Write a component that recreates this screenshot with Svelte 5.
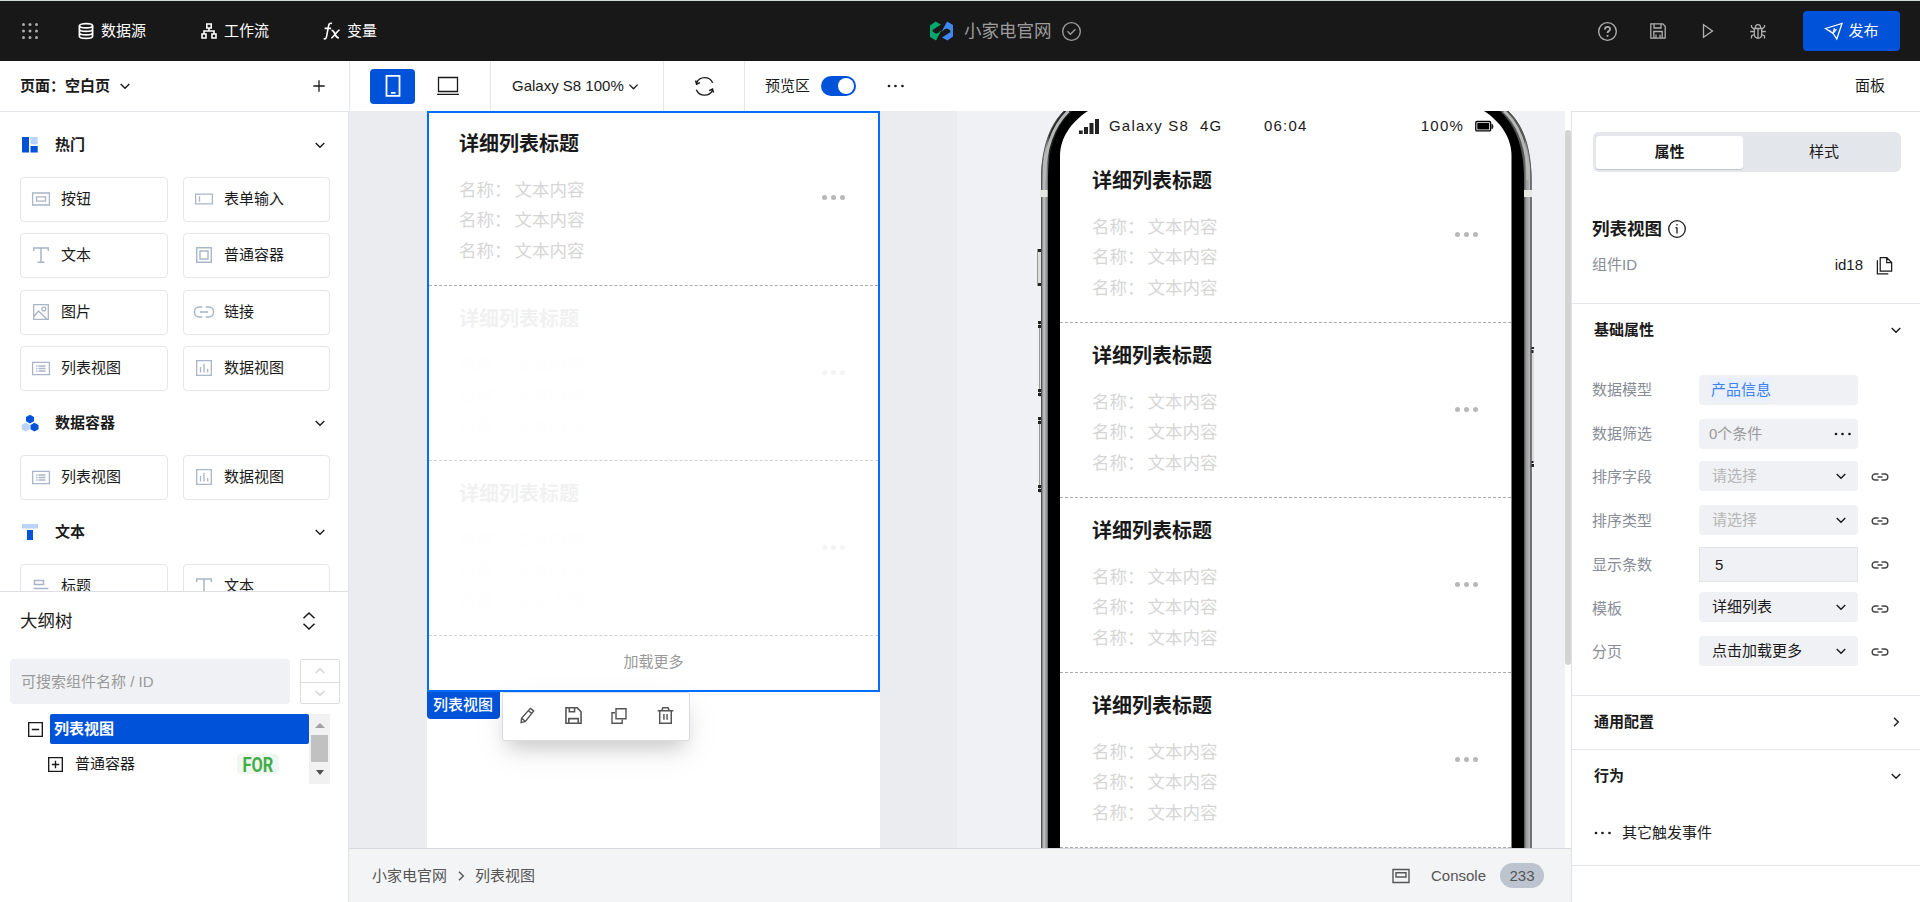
<script lang="ts">
  const icons: Record<string, string> = {
    apps: '<g fill="currentColor" stroke="none"><circle cx="3.5" cy="3.5" r="1.5"/><circle cx="10" cy="3.5" r="1.5"/><circle cx="16.5" cy="3.5" r="1.5"/><circle cx="3.5" cy="10" r="1.5"/><circle cx="10" cy="10" r="1.5"/><circle cx="16.5" cy="10" r="1.5"/><circle cx="3.5" cy="16.5" r="1.5"/><circle cx="10" cy="16.5" r="1.5"/><circle cx="16.5" cy="16.5" r="1.5"/></g>',
    database: '<g stroke-width="1.7"><ellipse cx="10" cy="4.7" rx="6.6" ry="2.1"/><path d="M3.4 4.7v10.6c0 1.2 3 2.1 6.6 2.1s6.6-.9 6.6-2.1V4.7M3.4 8.3c0 1.2 3 2.1 6.6 2.1s6.6-.9 6.6-2.1M3.4 11.8c0 1.2 3 2.1 6.6 2.1s6.6-.9 6.6-2.1"/></g>',
    flow: '<g stroke-width="1.6"><path d="M7.8 3h4.4v4H7.8zM3 13h4v4H3zM13 13h4v4h-4zM10 7v3M5 13v-3h10v3"/></g>',
    fx: '<g stroke-width="1.6"><path d="M10 2.6C7.7 1.6 6.9 3 6.5 5.2L4.6 15.4c-.4 2.3-1.3 2.8-2.9 2.2M2.6 7.4h6.5M9.5 9.3c2 0 2.4 1.2 3.4 3.6s1.6 4 4 4M17.6 9c-2.4.4-6 7.6-8.4 8"/></g>',
    help: '<circle cx="10" cy="10" r="8.4"/><path d="M7.5 8c0-3.2 5-3.2 5-.2 0 1.7-2.5 1.9-2.5 3.7M10 13.3v1.7" stroke-width="1.7"/>',
    save: '<path d="M2.8 2.8h12l2.4 2.4v12H2.8zM5.8 17v-6.5h8.4V17M6 3v4h7V3M8 13.5v3.5M12 13.5v3.5"/>',
    play: '<path d="M5.5 3.8v12.4l9-6.2z"/>',
    bug: '<path d="M6.3 7.5h7.4v6c0 5-7.4 5-7.4 0zM7.3 7.3c0-5 5.4-5 5.4 0M10 8v9M6 10.5H2.2M17.8 10.5H14M6 8L3.5 6V4M14 8l2.5-2V4M6.3 13.5L3.500 15v2.500M13.700 13.500l2.800 1.500v2.500"/>',
    send: '<path d="M1.5 7.5L18 2.5 12.8 18l-3.7-5.5zM9 12.4l1.5-5.2M5 9.3l4 3.1 3.500-4.200"/>',
    checkCircle: '<circle cx="10" cy="10" r="8.4"/><path d="M6.2 9.8l2.8 2.9 4.8-4.8"/>',
    down: '<path d="M5.7 8l4.3 4.3L14.3 8" stroke-width="1.4"/>',
    up: '<path d="M5.7 12L10 7.7l4.3 4.3"/>',
    right: '<path d="M8 5.700l4.300 4.300L8 14.300" stroke-width="1.400"/>',
    plus: '<path d="M10 4.300v11.400M4.300 10h11.400"/>',
    phone: '<path d="M3.500-.2h13v20h-13zM8 16.800h4.500" stroke-width="1.800"/>',
    laptop: '<path d="M.5 1.500h19v14H.5zM-1 18.300h22"/>',
    refresh: '<path d="M2.500 6.700C5-.2 15-.2 17.800 6.500M2.200 13c3 6.900 12.500 6.900 15.600.3M1.500 4.300l.9 3.500 3.300-1.500M18.600 15.900l-.9-3.500-3.300 1.500"/>',
    more: '<g fill="currentColor" stroke="none"><circle cx="3" cy="10" r="1.350"/><circle cx="9.500" cy="10" r="1.350"/><circle cx="16.500" cy="10" r="1.350"/></g>',
    button: '<path d="M1.600 4h16.800v12H1.600zM5.500 7.800h9v4.400h-9z"/>',
    input: '<path d="M1.600 5.200h16.800v9.600H1.600zM5.500 7.300v5.500"/>',
    text: '<path d="M2.700 6V3h14.600v3M10 3v14.300M6.500 17.300h7" stroke-width="1.500"/>',
    container: '<path d="M2.700 2.700h14.600v14.600H2.700zM6 6h8v8H6z" stroke-width="1.400"/>',
    image: '<path d="M2.700 2.700h14.600v14.600H2.700zM3 14.500L7.500 9l8.500 8.300"/><circle cx="12.800" cy="7" r="1.900"/>',
    chain: '<path d="M8.300 5H5.200C-1.200 5-1.200 15 5.200 15h3.100M11.700 5h3.100c6.400 0 6.400 10 0 10h-3.100M6 10h8" stroke-width="1.500"/>',
    list: '<path d="M1.600 4.300h16.800v12.400H1.600zM5.200 8h1.300M7.500 8h7M5.200 10.500h1.300M7.500 10.500h7M5.200 13h1.300M7.500 13h7"/>',
    chart: '<path d="M2.700 2.700h14.600v14.600H2.700zM6.500 9v5.500M10 5.700v8.800M13.700 11v3.500" stroke-width="1.300"/>',
    heading: '<path d="M3.500 4.500h9v4h-9zM2.500 12.500h15" stroke-width="1.500"/>',
    updown: '<path d="M5 7.500L10 2.700l5 4.800M5 12.500l5 4.800 5-4.800" stroke-width="1.400"/>',
    minus: '<path d="M3.500 3.500h13v13h-13zM6.500 10h7" stroke-width="1.300"/>',
    plusBox: '<path d="M3.500 3.500h13v13h-13zM6.500 10h7M10 6.500v7" stroke-width="1.300"/>',
    pencil: '<path d="M13 2.500l3.500 2.700-8.700 11-4.500 1.300.4-4.600zM11 5l3.500 2.800M3.900 13l3.700 3" stroke-width="1.500"/>',
    disk: '<path d="M2.800 2.700h10.700l3.700 3.700v10.900H2.800zM6 3v3.500h5V3M5.500 17v-4h9v4" stroke-width="1.500"/>',
    duplicate: '<path d="M7 2.700h10v10H7zM6 6.800H3v10.500h10.200v-3.500" stroke-width="1.400"/>',
    trash: '<path d="M4.500 6v11.300h11V6M2.500 5.500h15M6.500 5l1-2.300h5l1 2.300M8.500 8.500V14M11.500 8.500V14" stroke-width="1.400"/>',
    info: '<circle cx="10" cy="10" r="8.300"/><path d="M10 8.500v6M8.500 8.700H10M10 5v1.500"/>',
    copy: '<path d="M5.500 1.800h7l5 5V16h-12zM12.300 2v5h5M2.500 4.500v14.300h11.500" stroke-width="1.300"/>',
    window: '<path d="M2 3.500h16v13H2zM5 6.800h10v4.200H5z" stroke-width="1.400"/>',
  };

  const navItems = [
    { icon: 'database', label: '数据源' },
    { icon: 'flow', label: '工作流' },
    { icon: 'fx', label: '变量' },
  ];

  const groups = [
    {
      kind: 'hot',
      name: '热门',
      items: [
        ['button', '按钮'],
        ['input', '表单输入'],
        ['text', '文本'],
        ['container', '普通容器'],
        ['image', '图片'],
        ['chain', '链接'],
        ['list', '列表视图'],
        ['chart', '数据视图'],
      ],
    },
    {
      kind: 'data',
      name: '数据容器',
      items: [
        ['list', '列表视图'],
        ['chart', '数据视图'],
      ],
    },
    {
      kind: 'type',
      name: '文本',
      items: [
        ['heading', '标题'],
        ['text', '文本'],
      ],
    },
  ];

  const fields = [
    { label: '数据模型', value: '产品信息', kind: 'tag' },
    { label: '数据筛选', value: '0个条件', kind: 'filter' },
    { label: '排序字段', value: '请选择', kind: 'select', empty: true },
    { label: '排序类型', value: '请选择', kind: 'select', empty: true },
    { label: '显示条数', value: '5', kind: 'number' },
    { label: '模板', value: '详细列表', kind: 'select' },
    { label: '分页', value: '点击加载更多', kind: 'select' },
  ];

  let previewOn = $state(true);
  let activeTab = $state('属性');
</script>

{#snippet icon(name: string, size = 20)}
  <svg class="icon" width={size} height={size} viewBox="0 0 20 20" fill="none" stroke="currentColor" stroke-width="1.3">
    {@html icons[name]}
  </svg>
{/snippet}

{#snippet listItem(faded: boolean)}
  <div class="item" class:faded>
    <div class="item-title">详细列表标题</div>
    {#each [0, 1, 2] as row (row)}
      <div class="item-line"><span>名称：</span><span>文本内容</span></div>
    {/each}
    <div class="item-dots"><i></i><i></i><i></i></div>
  </div>
{/snippet}

<div class="app">
  <header class="topbar">
    <nav class="nav">
      <span class="apps">{@render icon('apps')}</span>
      {#each navItems as item}
        <a class="nav-item" href="#top">{@render icon(item.icon)}<span>{item.label}</span></a>
      {/each}
    </nav>
    <div class="project">
      <svg width="23" height="20" viewBox="0 0 23 20">
        <path d="M0 4.500L5.500.5 11 3.500 2.500 9v2l4 2.500L11.500 9 6 19.500 0 16z" fill="#07a86c" />
        <path d="M23 4v11.500L17.500 19.500 12 16.500 20.500 11V9l-4-2.500L11.500 11 17 .5z" fill="#4086f5" />
        <path d="M2 8.500L0 9.800v3l6 3 2.500-4-2.500 1-3.500-2zM21 11.500l2-1.300v-3l-6-3-2.500 4 2.500-1 3.500 2z" fill="#07a86c" />
        <path d="M21 11.500l2-1.300v-3l-6-3-2.500 4 2.500-1 3.500 2z" fill="#4086f5" />
      </svg>
      <span>小家电官网</span>
      {@render icon('checkCircle', 21)}
    </div>
    <div class="actions">
      {@render icon('help', 21)}
      {@render icon('save')}
      {@render icon('play')}
      {@render icon('bug')}
    </div>
    <button class="publish">{@render icon('send')}<span>发布</span></button>
  </header>

  <div class="toolbar">
    <div class="page-picker">
      <span>页面：空白页</span>
      {@render icon('down')}
      <span class="add">{@render icon('plus')}</span>
    </div>
    <div class="devices">
      <button class="device active">{@render icon('phone')}</button>
      {@render icon('laptop')}
    </div>
    <div class="zoom-picker">Galaxy S8 100% {@render icon('down', 19)}</div>
    <div class="reload">{@render icon('refresh', 21)}</div>
    <div class="preview-switch">
      <span>预览区</span>
      <button class="switch" class:on={previewOn} aria-label="预览区" onclick={() => (previewOn = !previewOn)}></button>
      {@render icon('more')}
    </div>
    <span class="panel-link">面板</span>
  </div>

  <div class="workspace">
    <aside class="sidebar">
      <div class="library">
        {#each groups as group}
          <div class="group-head">
            <svg width="18" height="18" viewBox="0 0 18 18">
              {#if group.kind === 'hot'}
                <path d="M1 1h7v15.500H1zM9.500 10h7.200v6.500H9.500z" fill="#0052d9" />
                <path d="M9.500 1h7.200v7.300H9.500z" fill="#bbd3fb" />
              {:else if group.kind === 'data'}
                <path d="M4.700 8.800l4 2.200v4.200l-4 2.200-4-2.200V11z" fill="#bbd3fb" />
                <path d="M9 .8l4 2.200v4.200L9 9.400 5 7.200V3zM13.500 8.800l4 2.200v4.200l-4 2.200-4-2.200V11z" fill="#0052d9" />
              {:else}
                <path d="M1 1h16v4.500H1z" fill="#bbd3fb" />
                <path d="M6 7h6v10H6z" fill="#0052d9" />
              {/if}
            </svg>
            <span>{group.name}</span>
            {@render icon('down')}
          </div>
          <div class="cards">
            {#each group.items as [glyph, label]}
              <div class="card">{@render icon(glyph)}<span>{label}</span></div>
            {/each}
          </div>
        {/each}
      </div>

      <section class="outline">
        <div class="outline-head"><span>大纲树</span>{@render icon('updown', 22)}</div>
        <div class="search-row">
          <input class="search" placeholder="可搜索组件名称 / ID" />
          <div class="stepper">
            <span>{@render icon('up')}</span>
            <span>{@render icon('down')}</span>
          </div>
        </div>
        <div class="tree">
          <div class="tree-rows">
            <div class="tree-row">
              {@render icon('minus', 21)}
              <span class="node selected">列表视图</span>
            </div>
            <div class="tree-row child">
              {@render icon('plusBox', 21)}
              <span class="node">普通容器</span>
              <span class="for"><b>FOR</b></span>
            </div>
          </div>
          <div class="tree-scroll">
            <i class="arrow-up"></i>
            <i class="thumb"></i>
            <i class="arrow-down"></i>
          </div>
        </div>
      </section>
    </aside>

    <main class="main">
      <div class="stage">
        <div class="edit-pane">
          <div class="canvas">
            <div class="selection">
              {@render listItem(false)}
              {@render listItem(true)}
              {@render listItem(true)}
              <div class="load-more">加载更多</div>
              <span class="selection-tag">列表视图</span>
              <div class="float-bar">
                {@render icon('pencil', 19)}
                {@render icon('disk', 21)}
                {@render icon('duplicate')}
                {@render icon('trash', 21)}
              </div>
            </div>
          </div>
        </div>
        <div class="preview-pane">
          <svg class="phone-frame" width="608" height="737" viewBox="957 111 608 737">
            <defs>
              <linearGradient id="metal" x1="1041" x2="1532" y1="0" y2="0" gradientUnits="userSpaceOnUse">
                <stop offset="0" stop-color="#444" />
                <stop offset=".003" stop-color="#8c9090" />
                <stop offset=".006" stop-color="#c3c6c6" />
                <stop offset=".012" stop-color="#8c9090" />
                <stop offset=".017" stop-color="#222" />
                <stop offset=".984" stop-color="#555" />
                <stop offset=".988" stop-color="#98989b" />
                <stop offset=".995" stop-color="#b9b9bd" />
                <stop offset="1" stop-color="#333" />
              </linearGradient>
            </defs>
            <g fill="#dcdfdf" stroke="#999" stroke-width="1">
              <rect x="1037.5" y="249.5" width="4" height="36" />
              <rect x="1039.5" y="322" width="2" height="74" />
              <rect x="1039.5" y="418" width="2" height="74" />
            </g>
            <path d="M1532 353h2v108h-2z" fill="#dcdadb" />
            <path
              d="M1038 249h3v3h-3zM1038 283h3v3h-3zM1038 321h3v3h-3zM1038 325h3v3h-3zM1038 389h3v3h-3zM1038 393h3v3h-3zM1038 417h3v3h-3zM1038 421h3v3h-3zM1038 485h3v3h-3zM1038 489h3v3h-3zM1531 347h3v2h-3zM1531 350h2.500v3h-2.500zM1531 461h2.500v2h-2.500zM1531 464h3v3h-3z"
              fill="#222"
            />
            <path d="M1064 111C1050 125 1041 148 1041 180V849H1531.500V180C1531.500 148 1523 125 1508 111z" fill="url(#metal)" />
            <path d="M1064 111C1050 125 1041.500 148 1041.500 180V849M1508 111C1523 125 1531 148 1531 180V849" fill="none" stroke="#555" />
            <path d="M1068.500 111C1054 125 1044.500 148 1044.500 180M1504 111C1519 125 1528 148 1528 180" fill="none" stroke="#b7b9b9" stroke-width="3" />
            <path d="M1072 111C1056 126 1048 148 1048 180V849H1524V180C1524 148 1516 126 1500 111z" fill="#000" />
            <path d="M1088 111C1071 122 1060 138 1060 156V849H1511.500V156C1511.500 138 1501 122 1484 111z" fill="#fff" />
            <path d="M1040 190h7.500v7H1040zM1524 190h8v7h-8z" fill="#e6e8e3" />
          </svg>
          <div class="screen">
            <div class="status">
              <svg width="20" height="16" viewBox="0 0 20 16" fill="#222">
                <path d="M0 12.500h3.700V16H0zM5 9h4V16H5zM10.500 5h4V16h-4zM16 1h4v15h-4z" />
              </svg>
              <span class="carrier">Galaxy S8</span>
              <span class="network">4G</span>
              <span class="clock">06:04</span>
              <span class="level">100%</span>
              <svg width="19" height="12" viewBox="0 0 19 12">
                <rect x=".8" y="1.500" width="14.800" height="9.400" rx="1" fill="none" stroke="#000" stroke-width="1.300" />
                <path d="M2.300 3h11.900v6.500H2.300zM16.500 4h1.200v1.500h.6v2h-.6V9h-1.200z" />
              </svg>
            </div>
            {#each [0, 1, 2, 3] as n (n)}
              {@render listItem(false)}
            {/each}
          </div>
        </div>
        <div class="pane-scroll"><i></i></div>
      </div>
      <footer class="footer">
        <span>小家电官网</span>
        {@render icon('right')}
        <span>列表视图</span>
        <div class="console">
          {@render icon('window')}
          <span>Console</span>
          <span class="count">233</span>
        </div>
      </footer>
    </main>

    <aside class="props">
      <div class="intro">
        <div class="tabs">
          {#each ['属性', '样式'] as tab}
            <button class="tab" class:active={activeTab === tab} onclick={() => (activeTab = tab)}>{tab}</button>
          {/each}
        </div>
        <div class="props-title"><span>列表视图</span>{@render icon('info')}</div>
        <div class="props-id">
          <span class="muted">组件ID</span>
          <span class="id">id18</span>
          {@render icon('copy', 19)}
        </div>
      </div>
      <section class="basic">
        <div class="section-head"><span>基础属性</span>{@render icon('down')}</div>
        <div class="fields">
          {#each fields as field}
            <div class="field">
              <span class="muted">{field.label}</span>
              <div class="control {field.kind}" class:empty={field.empty}>
                <span>{field.value}</span>
                {#if field.kind === 'select'}
                  {@render icon('down')}
                {:else if field.kind === 'filter'}
                  {@render icon('more')}
                {/if}
              </div>
              {#if field.kind === 'select' || field.kind === 'number'}
                <span class="bind">
                  <svg width="18" height="10" viewBox="0 0 18 10" fill="none" stroke="currentColor" stroke-width="1.400">
                    <path d="M7.500 2H4.300c-4.200 0-4.200 6 0 6h3.200M10.500 2h3.200c4.200 0 4.200 6 0 6h-3.200M6.500 5h5" />
                  </svg>
                </span>
              {/if}
            </div>
          {/each}
        </div>
      </section>
      <section class="common">
        <div class="section-head"><span>通用配置</span>{@render icon('right')}</div>
      </section>
      <section class="behavior">
        <div class="section-head"><span>行为</span>{@render icon('down')}</div>
        <div class="event">{@render icon('more')}<span>其它触发事件</span></div>
      </section>
    </aside>
  </div>
</div>

<style>
  :global(body) {
    overflow: hidden;
  }

  .app {
    display: flex;
    flex-direction: column;
    width: 1920px;
    height: 902px;
    font-family: "Liberation Sans", "Noto Sans CJK SC", sans-serif;
    font-size: 15px;
    line-height: 20px;
    color: #1a1a1a;
    background: #fff;
  }
  .app *,
  .app {
    box-sizing: border-box;
  }
  .icon {
    flex: none;
    display: block;
    overflow: visible;
  }
  button {
    font: inherit;
    border: none;
    padding: 0;
  }

  .topbar {
    display: flex;
    align-items: center;
    flex: none;
    height: 61px;
    padding-right: 20px;
    border-top: 1px solid #d2dad5;
    background: #181818;
    color: #fff;
  }
  .nav {
    display: flex;
    align-items: center;
    width: 930px;
    padding-left: 20px;
  }
  .apps {
    width: 56px;
    color: #aaa;
  }
  .nav-item {
    display: flex;
    align-items: center;
    gap: 5px;
    margin-right: 53px;
    color: inherit;
    text-decoration: none;
  }
  .project {
    display: flex;
    align-items: center;
    font-size: 17.5px;
    color: #9c9c9c;
  }
  .project span {
    margin: 0 9px 0 11px;
  }
  .actions {
    display: flex;
    align-items: center;
    gap: 30px;
    margin-left: auto;
    color: #b0b0b0;
  }
  .publish {
    display: flex;
    align-items: center;
    justify-content: center;
    gap: 4px;
    width: 97px;
    height: 40px;
    margin-left: 35px;
    border-radius: 4px;
    background: #0052d9;
    color: #fff;
  }

  .toolbar {
    display: flex;
    flex: none;
    height: 50px;
    align-items: stretch;
  }
  .toolbar > div {
    display: flex;
    align-items: center;
    border-right: 1px solid #e3e6eb;
  }
  .page-picker {
    width: 350px;
    padding: 0 20px;
    font-weight: 600;
  }
  .page-picker > span:first-child {
    margin-right: 5px;
  }
  .add {
    margin-left: auto;
  }
  .devices {
    width: 141px;
    padding-left: 20px;
    gap: 23px;
  }
  .device {
    display: flex;
    align-items: center;
    justify-content: center;
    width: 45px;
    height: 35px;
    border-radius: 4px;
    background: #0052d9;
    color: #fff;
  }
  .zoom-picker {
    width: 173px;
    padding-left: 21px;
    white-space: nowrap;
  }
  .reload {
    width: 81px;
    justify-content: center;
  }
  .toolbar .preview-switch {
    padding-left: 20px;
    border: none;
  }
  .switch {
    width: 35px;
    height: 20px;
    margin: 0 30px 0 11px;
    padding: 2px;
    border-radius: 10px;
    background: #c4c9d2;
    text-align: left;
  }
  .switch::after {
    content: "";
    display: block;
    width: 16px;
    height: 16px;
    border-radius: 50%;
    background: #fff;
  }
  .switch.on {
    background: #0052d9;
  }
  .switch.on::after {
    margin-left: auto;
  }
  .panel-link {
    align-self: center;
    margin: 0 35px 0 auto;
  }

  .workspace {
    display: flex;
    height: 791px;
  }
  .sidebar {
    display: flex;
    flex-direction: column;
    width: 349px;
    border-top: 1px solid #e3e6eb;
    border-right: 1px solid #e0e2e8;
  }
  .library {
    height: 479px;
    padding: 1px 18px 0 20px;
    overflow: hidden;
  }
  .group-head {
    display: flex;
    align-items: center;
    height: 64px;
    padding-left: 1px;
    font-weight: 600;
  }
  .group-head > span {
    flex: 1;
    margin-left: 16px;
  }
  .cards {
    display: grid;
    grid-template-columns: 148px 147px;
    gap: 11.33px 15px;
  }
  .card {
    display: flex;
    align-items: center;
    gap: 10px;
    height: 45px;
    padding: 0 0 1px 10px;
    border: 1px solid #e3e6eb;
    border-radius: 4px;
  }
  .card :global(.icon) {
    color: #a9b5c8;
  }

  .outline {
    flex: 1;
    border-top: 1px solid #dcdee3;
  }
  .outline-head {
    display: flex;
    align-items: center;
    justify-content: space-between;
    height: 57px;
    padding: 0 28px 0 20px;
    font-size: 17.5px;
  }
  .search-row {
    display: flex;
    gap: 10px;
    margin: 10px 8px 10px 10px;
  }
  .search {
    width: 280px;
    height: 45px;
    padding: 0 11px;
    border: none;
    border-radius: 4px;
    background: #f0f1f5;
    font: inherit;
  }
  .search::placeholder {
    color: #999;
  }
  .stepper {
    width: 40px;
    height: 45px;
    border: 1px solid #dcdcdc;
    border-radius: 2px;
    color: #d2d2d2;
  }
  .stepper span {
    display: flex;
    align-items: center;
    justify-content: center;
    height: 21.5px;
  }
  .stepper span + span {
    border-top: 1px solid #dcdcdc;
  }
  .tree {
    display: flex;
    height: 70px;
    padding-left: 25px;
  }
  .tree-rows {
    width: 284px;
  }
  .tree-row {
    display: flex;
    align-items: center;
    height: 30px;
    gap: 4px;
  }
  .tree-row.child {
    height: 40px;
    padding: 0 30px 0 20px;
  }
  .node {
    flex: 1;
    padding-left: 5px;
    line-height: 30px;
  }
  .node.selected {
    padding-left: 4px;
    border-radius: 2px;
    background: #0052d9;
    color: #fff;
    font-weight: 600;
  }
  .for {
    display: flex;
    align-items: center;
    justify-content: center;
    width: 42px;
    height: 20px;
    border-radius: 4px;
    background: #f0f7f0;
  }
  .for b {
    color: #41ad49;
    font-family: Roboto, sans-serif;
    font-size: 20px;
    font-weight: 700;
    line-height: 22px;
    transform: translateY(1px) scaleX(0.82);
  }
  .tree-scroll {
    display: flex;
    flex-direction: column;
    align-items: center;
    width: 21px;
    padding-top: 9px;
    background: #f1f1f1;
  }
  .arrow-up {
    border: 5px solid transparent;
    border-top: none;
    border-bottom-color: #a3a3a3;
  }
  .thumb {
    width: 17px;
    height: 27px;
    margin: 7px 0 8px;
    background: #c1c1c1;
  }
  .arrow-down {
    border: 4px solid transparent;
    border-bottom: none;
    border-top: 5px solid #505050;
  }

  .main {
    width: 1222px;
  }
  .stage {
    display: flex;
    height: 737px;
    overflow: hidden;
  }
  .edit-pane {
    width: 608px;
    padding-left: 78px;
    background: #ebecf0;
  }
  .canvas {
    width: 453px;
    height: 737px;
    background: #fff;
  }
  .selection {
    position: relative;
    width: 453px;
    height: 581px;
    border: 2px solid #006eff;
    background: #fff;
  }
  .item {
    position: relative;
    height: 175px;
    padding: 17px 0 0 32px;
    border-bottom: 1px dashed #aaa;
  }
  .selection .item {
    padding-left: 30px;
  }
  .selection .item:first-child {
    height: 173px;
    padding-top: 15px;
  }
  .item.faded {
    border-color: #d0d0d0;
  }
  .item-title {
    margin-bottom: 15px;
    font-size: 20px;
    font-weight: 700;
    line-height: 32px;
  }
  .item-line {
    display: flex;
    gap: 3px;
    font-size: 17.5px;
    line-height: 30.4px;
    color: #d6d6d6;
  }
  .item-dots {
    position: absolute;
    right: 33px;
    top: 84px;
    display: flex;
    gap: 4px;
  }
  .selection .item:first-child .item-dots {
    top: 82px;
  }
  .item-dots i {
    width: 5px;
    height: 5px;
    border-radius: 50%;
    background: #b8b8b8;
  }
  .faded .item-title {
    color: #f1f1f1;
  }
  .faded .item-line {
    color: #fefefe;
  }
  .faded .item-dots i {
    background: #f4f4f4;
  }
  .load-more {
    line-height: 51px;
    text-align: center;
    color: #999;
  }
  .selection-tag {
    position: absolute;
    left: -2px;
    top: 579px;
    width: 73px;
    height: 27px;
    padding-left: 6px;
    border-radius: 0 0 4px 4px;
    background: #0052d9;
    color: #fff;
    font-weight: 500;
    line-height: 26px;
  }
  .float-bar {
    position: absolute;
    left: 73px;
    top: 579px;
    display: flex;
    align-items: center;
    justify-content: space-between;
    width: 188px;
    height: 49px;
    padding: 0 13px 2px 15px;
    border: 1px solid #d9dce5;
    border-radius: 3px;
    background: #fff;
    box-shadow: 0 12px 20px -6px rgba(0, 0, 0, 0.18), 0 12px 36px rgba(0, 0, 0, 0.06);
    color: #555;
  }

  .preview-pane {
    position: relative;
    width: 608px;
    background: #f0f1f5;
  }
  .phone-frame {
    position: absolute;
    left: 0;
    top: 0;
  }
  .screen {
    position: relative;
    width: 451px;
    margin-left: 103px;
  }
  .status {
    display: flex;
    align-items: center;
    height: 37px;
    padding: 0 17px 7px 19px;
    letter-spacing: 1.2px;
  }
  .carrier {
    width: 91px;
    margin-left: 10px;
  }
  .network {
    width: 64px;
  }
  .clock {
    flex: 1;
  }
  .level {
    margin-right: 11px;
  }
  .pane-scroll {
    width: 6px;
    padding-top: 19px;
    background: #fff;
  }
  .pane-scroll i {
    display: block;
    height: 535px;
    border-radius: 3px;
    background: #d4d4d4;
  }

  .footer {
    display: flex;
    align-items: center;
    gap: 4px;
    height: 54px;
    padding: 0 27px 0 23px;
    border-top: 1px solid #d5d9e3;
    background: #f3f4f6;
    color: #555;
  }
  .console {
    display: flex;
    align-items: center;
    margin-left: auto;
  }
  .console > span {
    margin-left: 20px;
  }
  .console .count {
    width: 44px;
    height: 25px;
    margin-left: 14px;
    border-radius: 13px;
    background: #bcc4d0;
    line-height: 26px;
    text-align: center;
  }

  .props {
    width: 349px;
    border-top: 1px solid #e0e2e6;
    border-left: 1px solid #e0e2e6;
  }
  .intro {
    height: 192px;
    padding: 20px 19px 0 20px;
    border-bottom: 1px solid #e3e6eb;
  }
  .tabs {
    display: flex;
    height: 40px;
    padding: 4px 3px;
    margin-left: 1px;
    border-radius: 6px;
    background: #e3e6eb;
  }
  .tab {
    flex: 1;
    height: 33px;
    padding: 0 0 1px 7px;
    border-radius: 3px;
    background: none;
    color: #1a1a1a;
  }
  .tab.active {
    flex: 0 0 147px;
    padding-left: 0;
    background: #fff;
    box-shadow: 0 1px 0 #c0c7d4;
    font-weight: 600;
  }
  .props-title {
    display: flex;
    align-items: center;
    gap: 5px;
    height: 34px;
    margin-top: 40px;
    font-size: 17.5px;
    font-weight: 600;
  }
  .props-id {
    display: flex;
    align-items: center;
    height: 38px;
    padding-right: 7px;
  }
  .muted {
    color: #878c96;
  }
  .id {
    margin: 0 12px 0 auto;
  }
  .section-head {
    display: flex;
    align-items: center;
    justify-content: space-between;
    height: 51px;
    padding: 0 14px 0 22px;
    font-weight: 600;
  }
  .basic {
    height: 392px;
    border-bottom: 1px solid #e3e6eb;
  }
  .fields {
    padding: 13px 0 0 20px;
  }
  .field {
    display: flex;
    align-items: center;
    height: 43.75px;
  }
  .field .muted {
    width: 107px;
  }
  .control {
    display: flex;
    align-items: center;
    justify-content: space-between;
    width: 159px;
    height: 30px;
    padding: 0 7px 0 13px;
    border-radius: 4px;
    background: #f0f1f5;
  }
  .control.select {
    margin-top: -3px;
  }
  .control.filter {
    padding: 0 5px 0 10px;
    color: #999;
  }
  .control.filter :global(.icon) {
    color: #1a1a1a;
  }
  .control.tag {
    padding-left: 12px;
    color: #3e82f0;
  }
  .control.tag span {
    background: #e8f0fd;
    line-height: 23px;
  }
  .control.number {
    height: 35px;
    padding-left: 15px;
    border: 1px solid #e1e4e8;
    border-radius: 0;
  }
  .control.empty span {
    color: #b5b5b5;
  }
  .bind {
    margin-left: 13px;
    color: #444;
  }
  .bind svg {
    display: block;
  }
  .common {
    height: 54px;
    border-bottom: 1px solid #e3e6eb;
  }
  .behavior {
    height: 116px;
    border-bottom: 1px solid #e3e6eb;
  }
  .event {
    display: flex;
    align-items: center;
    gap: 9px;
    height: 64px;
    padding-left: 21px;
  }
</style>
